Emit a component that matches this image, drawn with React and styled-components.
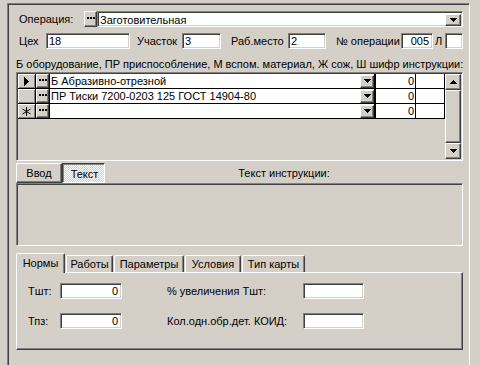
import React from 'react';
import styled, { createGlobalStyle, css } from 'styled-components';

const FACE = '#d4d0c8';

const GlobalStyle = createGlobalStyle`
  * { box-sizing: border-box; }
  html, body { margin: 0; padding: 0; background: ${FACE}; overflow: hidden; }
  body { font-family: "Liberation Sans", Arial, sans-serif; font-size: 11px; color: #000; }
`;

// classic 3D borders
const sunken = css`
  border: 1px solid;
  border-color: #808080 #fff #fff #808080;
  box-shadow: inset 1px 1px #404040, inset -1px -1px ${FACE};
`;

const raised = css`
  border: 1px solid;
  border-color: #fff #404040 #404040 #fff;
  box-shadow: inset -1px -1px #808080;
  background: ${FACE};
`;

const Screen = styled.div`
  width: 480px;
  height: 365px;
  overflow: hidden;
  padding: 3px 0 0 7px;
`;

const Panel = styled.div`
  width: 463px;
  height: 375px;
  border: 1px solid;
  border-color: #808080 #fff #fff #808080;
  box-shadow: inset 1px 1px #404040;
  padding: 7px 6px 0 8px;
`;

const Row = styled.div`
  display: flex;
  align-items: center;
  height: 16px;
  margin-top: ${p => p.mt || 0}px;
`;

const Label = styled.span`
  flex: none;
  width: ${p => p.w}px;
  padding-left: ${p => p.pl || 0}px;
  white-space: nowrap;
`;

const Field = styled.div`
  ${sunken};
  flex: none;
  width: ${p => p.w}px;
  height: 16px;
  background: #fff;
  padding: 0 ${p => (p.right ? 3 : 2)}px;
  line-height: 14px;
  text-align: ${p => (p.right ? 'right' : 'left')};
  white-space: nowrap;
  overflow: hidden;
`;

const DotsButton = styled.div`
  ${raised};
  flex: none;
  width: 13px;
  height: ${p => p.h || 16}px;
  display: flex;
  align-items: center;
  justify-content: center;
  padding-bottom: 2px;
`;

const Combo = styled.div`
  ${sunken};
  flex: 1;
  height: 16px;
  background: #fff;
  display: flex;
  align-items: center;
  padding: 2px 1px 1px 2px;
`;

const ComboText = styled.span`
  flex: 1;
  line-height: 12px;
  white-space: nowrap;
`;

const DropButton = styled.div`
  ${raised};
  flex: none;
  width: ${p => p.w || 16}px;
  height: ${p => p.h || 12}px;
  display: flex;
  align-items: center;
  justify-content: center;
`;

const Caption = styled.div`
  margin-top: 9px;
  height: 13px;
  line-height: 13px;
  white-space: nowrap;
`;

const Grid = styled.div`
  ${sunken};
  margin-top: 1px;
  height: 89px;
  padding: 1px;
  display: flex;
  background: ${FACE};
`;

const Rows = styled.div`
  width: 427px;
`;

const GridRow = styled.div`
  display: flex;
  height: 15px;
  border-bottom: 1px solid #000;
`;

const HeadCell = styled.div`
  width: 18px;
  border-right: 1px solid #000;
  background: ${FACE};
  box-shadow: inset 1px 1px #fff, inset -1px -1px #808080;
  display: flex;
  align-items: center;
  justify-content: center;
`;

const BtnCell = styled.div`
  width: 14px;
  border-right: 1px solid #000;
  display: flex;
`;

const TextCell = styled.div`
  width: 326px;
  border-right: 2px solid #000;
  background: #fff;
  display: flex;
  align-items: center;
  padding-left: 1px;
`;

const CellText = styled.span`
  flex: 1;
  white-space: nowrap;
  line-height: 14px;
`;

const NumCell = styled.div`
  width: ${p => p.w}px;
  border-right: 1px solid #000;
  background: #fff;
  text-align: right;
  padding-right: 1px;
  line-height: 14px;
`;

const ScrollBar = styled.div`
  width: 16px;
  display: flex;
  flex-direction: column;
`;

const ScrollBtn = styled.div`
  ${raised};
  height: 16px;
  flex: none;
  display: flex;
  align-items: center;
  justify-content: center;
`;

const Thumb = styled.div`
  ${raised};
  flex: 1;
`;

const SwitchRow = styled.div`
  display: flex;
  height: 20px;
  margin-top: 2px;
`;

const SwitchBtn = styled.div`
  flex: none;
  width: ${p => p.w}px;
  display: flex;
  align-items: center;
  justify-content: center;
  ${p =>
    p.pressed
      ? css`
          border: 1px solid;
          border-color: #404040 #fff #fff #404040;
          box-shadow: inset 1px 1px #808080;
          background: repeating-conic-gradient(#fff 0 25%, ${FACE} 0 50%) 0 0 / 2px 2px;
          padding: 2px 0 0 2px;
        `
      : raised}
`;

const SwitchTitle = styled.div`
  flex: 1;
  text-align: center;
  line-height: 20px;
`;

const Memo = styled.div`
  ${sunken};
  height: 63px;
  background: ${FACE};
`;

const TabStrip = styled.div`
  display: flex;
  align-items: flex-end;
  height: 19px;
  margin-top: 7px;
  position: relative;
  z-index: 1;
`;

const Tab = styled.div`
  flex: none;
  width: ${p => p.w}px;
  height: ${p => (p.active ? 20 : 17)}px;
  margin-right: 1px;
  margin-bottom: ${p => (p.active ? -1 : 0)}px;
  border: 1px solid;
  border-bottom: none;
  border-color: #fff #404040 transparent #fff;
  box-shadow: inset -1px 0 #808080;
  border-radius: 2px 2px 0 0;
  background: ${FACE};
  display: flex;
  align-items: center;
  justify-content: center;
  padding-bottom: ${p => (p.active ? 2 : 0)}px;
  white-space: nowrap;
`;

const TabPage = styled.div`
  height: 78px;
  border: 1px solid;
  border-color: #fff #404040 #404040 #fff;
  box-shadow: inset -1px -1px #808080;
  display: grid;
  grid-template-columns: 43px 62px 45px 136px 61px;
  grid-auto-rows: 16px;
  row-gap: 14px;
  align-items: center;
  padding-top: 10px;
`;

const PageLabel = styled.span`
  padding-left: ${p => p.pl || 0}px;
  white-space: nowrap;
`;

const Dots = () => (
  <svg width="8" height="2" shapeRendering="crispEdges">
    <rect x="0" y="0" width="2" height="2" fill="#000" />
    <rect x="3" y="0" width="2" height="2" fill="#000" />
    <rect x="6" y="0" width="2" height="2" fill="#000" />
  </svg>
);

const Arrow = ({ up }) => (
  <svg width="7" height="4" shapeRendering="crispEdges">
    {[7, 5, 3, 1].map((w, i) => (
      <rect key={i} x={(7 - w) / 2} y={up ? 3 - i : i} width={w} height="1" fill="#000" />
    ))}
  </svg>
);

const Pointer = () => (
  <svg width="5" height="9" shapeRendering="crispEdges">
    <polygon points="0,0 5,4.5 0,9" fill="#000" />
  </svg>
);

const Star = () => (
  <svg width="9" height="9">
    <g stroke="#000" strokeWidth="1">
      <line x1="4.5" y1="0" x2="4.5" y2="9" />
      <line x1="0.5" y1="2" x2="8.5" y2="7" />
      <line x1="0.5" y1="7" x2="8.5" y2="2" />
    </g>
  </svg>
);

const rows = [
  { mark: 'pointer', text: 'Б Абразивно-отрезной', qty: '0' },
  { mark: null, text: 'ПР Тиски 7200-0203 125 ГОСТ 14904-80', qty: '0' },
  { mark: 'star', text: '', qty: '0' },
];

const tabs = [
  { name: 'Нормы', w: 49, active: true },
  { name: 'Работы', w: 47 },
  { name: 'Параметры', w: 70 },
  { name: 'Условия', w: 56 },
  { name: 'Тип карты', w: 63 },
];

export default function App() {
  return (
    <>
      <GlobalStyle />
      <Screen>
        <Panel>
          <Row>
            <Label w={68} pl={3}>Операция:</Label>
            <DotsButton><Dots /></DotsButton>
            <Combo>
              <ComboText>Заготовительная</ComboText>
              <DropButton><Arrow /></DropButton>
            </Combo>
          </Row>

          <Row mt={6}>
            <Label w={30} pl={3}>Цех</Label>
            <Field w={84}>18</Field>
            <Label w={52} pl={7}>Участок</Label>
            <Field w={39}>3</Field>
            <Label w={67} pl={10}>Раб.место</Label>
            <Field w={38}>2</Field>
            <Label w={75} pl={10}>№ операции</Label>
            <Field w={32} right>005</Field>
            <Label w={12} pl={2}>Л</Label>
            <Field w={18} />
          </Row>

          <Caption>Б оборудование, ПР приспособление, М вспом. материал, Ж сож, Ш шифр инструкции:</Caption>

          <Grid>
            <Rows>
              {rows.map((r, i) => (
                <GridRow key={i}>
                  <HeadCell>
                    {r.mark === 'pointer' && <Pointer />}
                    {r.mark === 'star' && <Star />}
                  </HeadCell>
                  <BtnCell>
                    <DotsButton h={14}><Dots /></DotsButton>
                  </BtnCell>
                  <TextCell>
                    <CellText>{r.text}</CellText>
                    <DropButton w={14} h={13}><Arrow /></DropButton>
                  </TextCell>
                  <NumCell w={40}>{r.qty}</NumCell>
                  <NumCell w={29} />
                </GridRow>
              ))}
            </Rows>
            <ScrollBar>
              <ScrollBtn><Arrow up /></ScrollBtn>
              <Thumb />
              <ScrollBtn><Arrow /></ScrollBtn>
            </ScrollBar>
          </Grid>

          <SwitchRow>
            <SwitchBtn w={46}>Ввод</SwitchBtn>
            <SwitchBtn w={43} pressed>Текст</SwitchBtn>
            <SwitchTitle>Текст инструкции:</SwitchTitle>
          </SwitchRow>
          <Memo />

          <TabStrip>
            {tabs.map(t => (
              <Tab key={t.name} w={t.w} active={t.active}>{t.name}</Tab>
            ))}
          </TabStrip>
          <TabPage>
            <PageLabel pl={11}>Тшт:</PageLabel>
            <Field w={62} right>0</Field>
            <span />
            <PageLabel>% увеличения Тшт:</PageLabel>
            <Field w={61} />
            <PageLabel pl={11}>Тпз:</PageLabel>
            <Field w={62} right>0</Field>
            <span />
            <PageLabel>Кол.одн.обр.дет. КОИД:</PageLabel>
            <Field w={61} />
          </TabPage>
        </Panel>
      </Screen>
    </>
  );
}
